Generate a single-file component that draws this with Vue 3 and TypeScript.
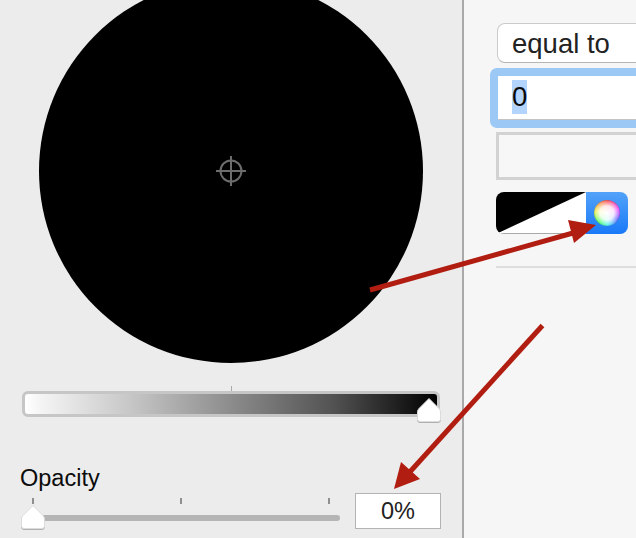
<script setup lang="ts">
const ticks: number[] = [0, 148, 296]
</script>

<template>
  <div class="window">
    <section class="picker">
      <div class="wheel">
        <svg class="crosshair" width="30" height="30" viewBox="0 0 30 30" aria-hidden="true">
          <circle cx="15" cy="15" r="10.5" />
          <path d="M0 15H30M15 0V30" />
        </svg>
      </div>

      <div class="brightness">
        <span class="brightness-tick"></span>
        <svg class="thumb brightness-thumb" width="26" height="26" viewBox="0 0 26 26" aria-hidden="true">
          <path d="M13 1.500 23 11.500Q24.500 13 24.500 15V22a2.500 2.500 0 0 1-2.500 2.500H4A2.500 2.500 0 0 1 1.500 22V15Q1.500 13 3 11.500Z" />
        </svg>
      </div>

      <div class="opacity-row">
        <div class="opacity-left">
          <div class="opacity-label">Opacity</div>
          <div class="slider">
            <span v-for="t in ticks" :key="t" class="tick" :style="{ left: t + 'px' }"></span>
            <svg class="thumb opacity-thumb" width="26" height="26" viewBox="0 0 26 26" aria-hidden="true">
              <path d="M13 1.500 23 11.500Q24.500 13 24.500 15V22a2.500 2.500 0 0 1-2.500 2.500H4A2.500 2.500 0 0 1 1.500 22V15Q1.500 13 3 11.500Z" />
            </svg>
          </div>
        </div>
        <div class="opacity-input">0%</div>
      </div>
    </section>

    <section class="inspector">
      <div class="select">equal to</div>
      <div class="focus-input"><span class="selected">0</span></div>
      <div class="empty-input"></div>
      <div class="well">
        <div class="swatch"></div>
        <div class="wheel-button"><span class="ball"></span></div>
      </div>
      <div class="divider"></div>
    </section>

    <svg class="arrows" width="636" height="538" viewBox="0 0 636 538" aria-hidden="true">
      <path class="shaft" d="M370 290 573 233" />
      <path class="head" d="M596 225 568 220 574 243Z" />
      <path class="shaft" d="M542.500 325.500 408 474" />
      <path class="head" d="M394 489 401 462 420 479Z" />
    </svg>
  </div>
</template>

<style>
html,
body {
  margin: 0;
  overflow: hidden;
}
</style>

<style scoped>
.window {
  position: relative;
  display: flex;
  width: 636px;
  height: 538px;
  overflow: hidden;
  background: #f6f6f6;
  font-family: "Liberation Sans", Arial, sans-serif;
  color: #111;
}

.picker {
  box-sizing: border-box;
  flex: none;
  width: 464px;
  height: 538px;
  background: #ececec;
  border-right: 2px solid #a9a9a9;
}

.wheel {
  display: flex;
  align-items: center;
  justify-content: center;
  width: 384px;
  height: 384px;
  margin: -21px 0 0 39px;
  border-radius: 50%;
  background: #000;
}

.crosshair {
  fill: none;
  stroke: #6c6c6c;
  stroke-width: 2;
}

.brightness {
  position: relative;
  box-sizing: border-box;
  width: 418px;
  height: 26px;
  margin: 28px 0 0 22px;
  border: 3px solid #c6c6c6;
  border-radius: 6px;
  background: linear-gradient(to right, #fff 0%, #f4f4f4 4%, #c8c8c8 25%, #8c8c8c 50%, #525252 75%, #1a1a1a 92%, #000 100%);
}

.brightness-tick {
  position: absolute;
  left: 206px;
  top: -8px;
  width: 1px;
  height: 5px;
  background: #aaa;
}

.thumb path {
  fill: #fff;
  stroke: #dcdcdc;
  stroke-width: 1;
}

.thumb {
  position: absolute;
  filter: drop-shadow(0 1px 0 rgba(0, 0, 0, 0.25));
}

.brightness-thumb {
  right: -5px;
  top: 3px;
}

.opacity-row {
  display: flex;
  align-items: flex-end;
  margin: 46px 0 0 20px;
}

.opacity-left {
  width: 320px;
}

.opacity-label {
  font-size: 23.500px;
  line-height: 30px;
  color: #0b0b0b;
}

.slider {
  position: relative;
  height: 6px;
  margin: 22px 0 8px 12px;
  width: 308px;
  border-radius: 3px;
  background: #b5b5b5;
}

.tick {
  position: absolute;
  top: -17px;
  width: 2px;
  height: 6px;
  background: #8f8f8f;
}

.opacity-thumb {
  left: -12px;
  top: -11px;
}

.opacity-input {
  box-sizing: border-box;
  width: 86px;
  height: 36px;
  margin-left: 15px;
  border: 1px solid #b3b3b3;
  background: #fff;
  font-size: 23.500px;
  line-height: 35px;
  text-align: center;
  color: #222;
}

.inspector {
  flex: 1;
  min-width: 0;
  padding: 23px 0 0 32px;
  margin-right: -40px;
}

.select {
  box-sizing: border-box;
  height: 40px;
  margin-left: 1px;
  padding-left: 14px;
  border: 1px solid #cbcbcb;
  border-bottom-color: #b5b5b5;
  border-radius: 8px;
  background: #fff;
  font-size: 27.500px;
  line-height: 39px;
  color: #222;
}

.focus-input {
  box-sizing: border-box;
  height: 60px;
  margin: 5px 0 0 -6px;
  padding: 4px 0 0 14px;
  border: 8px solid #9cc8f6;
  border-radius: 7px;
  background: #fff;
  box-shadow: inset 0 -1px 0 #c4c4c4;
  font-size: 27.500px;
  line-height: 34px;
  color: #0a0a0a;
}

.selected {
  display: inline-block;
  background: #b3d4fc;
}

.empty-input {
  box-sizing: border-box;
  height: 48px;
  margin-top: 4px;
  border: 3px solid #d2d2d2;
  background: #f7f7f7;
}

.well {
  display: flex;
  width: 132px;
  height: 42px;
  margin-top: 12px;
  border-radius: 8px;
  overflow: hidden;
}

.swatch {
  flex: none;
  width: 90px;
  background: linear-gradient(to bottom right, #000 calc(50% - 0.5px), #fff calc(50% + 0.5px));
  box-shadow: inset 0 -1px 0 #aaa;
}

.wheel-button {
  display: flex;
  flex: 1;
  align-items: center;
  justify-content: center;
  background: linear-gradient(to bottom, #52a2f9, #1a79f8);
}

.ball {
  width: 26px;
  height: 26px;
  border-radius: 50%;
  background:
    radial-gradient(circle, #fff 0%, rgba(255, 255, 255, 0.88) 38%, rgba(255, 255, 255, 0) 76%),
    conic-gradient(#f33, #e3f 70deg, #55f 120deg, #3ee 175deg, #3f5 220deg, #ee3 280deg, #f33);
  box-shadow: inset 0 0 1px rgba(80, 40, 80, 0.8);
}

.divider {
  height: 2px;
  margin-top: 32px;
  background: #dedede;
}

.arrows {
  position: absolute;
  left: 0;
  top: 0;
  pointer-events: none;
}

.shaft {
  fill: none;
  stroke: #b11d10;
  stroke-width: 5;
}

.head {
  fill: #b11d10;
}
</style>
